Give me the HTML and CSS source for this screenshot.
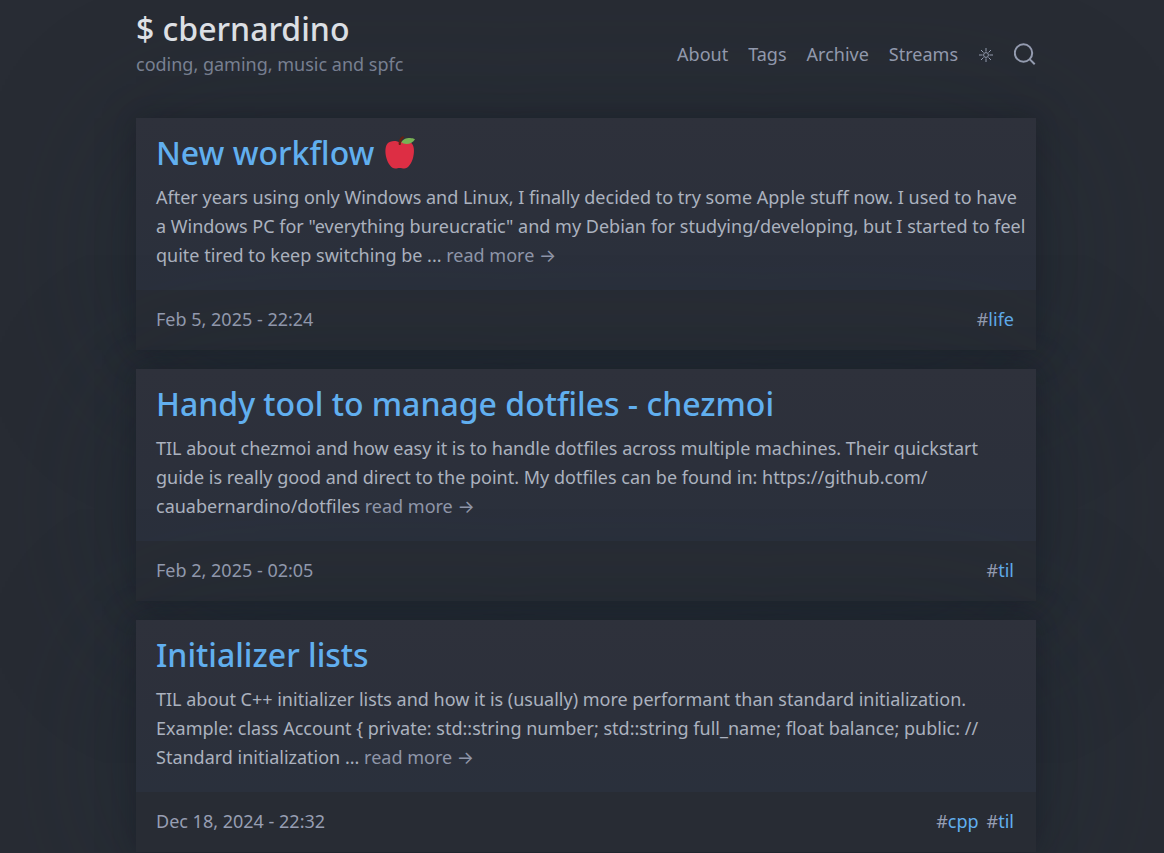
FILE: index.html
```html
<!DOCTYPE html>
<html lang="en">
<head>
<meta charset="utf-8">
<meta name="viewport" content="width=device-width, initial-scale=1">
<title>$ cbernardino</title>
<link rel="stylesheet" href="styles.css">
</head>
<body>
<div class="page">
  <header class="header">
    <div class="brand">
      <a class="brand-name" href="#">$ cbernardino</a>
      <p class="tagline">coding, gaming, music and spfc</p>
    </div>
    <nav class="nav">
      <a href="#">About</a>
      <a href="#">Tags</a>
      <a href="#">Archive</a>
      <a href="#">Streams</a>
      <button class="icon-button" type="button" aria-label="Toggle theme">
        <svg width="16" height="16" viewBox="0 0 16 16" fill="none" stroke="currentColor" stroke-width="1"><circle cx="8" cy="8" r="2.400"/><path d="M8 1v3.600M8 11.400v3.600M1 8h3.600M11.400 8h3.600M3 3l2.500 2.500M10.500 10.500L13 13M3 13l2.500-2.500M10.500 5.500L13 3"/></svg>
      </button>
      <button class="icon-button" type="button" aria-label="Search">
        <svg width="22" height="24" viewBox="0 0 22 24" fill="none" stroke="currentColor" stroke-width="2"><circle cx="9.500" cy="10" r="8.700"/><path d="M15.600 16.100L20.700 21.200"/></svg>
      </button>
    </nav>
  </header>
  <main class="posts">
    <article class="card">
      <div class="card-body">
        <h2><a href="#">New workflow</a>
          <svg class="apple" width="32" height="34" viewBox="0 0 32 34" role="img" aria-label="Apple"><path fill="#dd2e44" d="M16 6.500C12.500 4.200 6 4.300 3.300 7.800C1 10.800 1 17 2.400 22C3.800 27.500 7.500 32.500 11.300 32.500C13.200 32.500 14 32 15.700 32C17.500 32 18.500 32.500 20.300 32.500C24 32.500 27.500 27.500 29 22C30.400 17 30.500 10.800 28 7.800C25.500 4.300 19.500 4.200 16 6.500Z"/><path fill="#662113" d="M14.800 8.800C14.300 6 15.300 1.600 18.500.400C19.500.1 20.600 1 19.800 1.700C17.300 4 17 6 16.800 8.500C16.600 9.200 15.200 9.300 14.800 8.800Z"/><path fill="#77b255" d="M17.400 6.300C18.500 3.300 22.500 1.900 26 2C28 2.100 29.500 2.500 31 3.200C29.300 6.300 26 7.900 22.500 7.900C20.300 7.900 18.400 7.400 17.400 6.300Z"/></svg>
        </h2>
        <p>After years using only Windows and Linux, I finally decided to try some Apple stuff now. I used to have a Windows PC for "everything bureucratic" and my Debian for studying/developing, but I started to feel quite tired to keep switching be ... <a href="#">read more →</a></p>
      </div>
      <footer class="card-footer">
        <time datetime="2025-02-05T22:24">Feb 5, 2025 - 22:24</time>
        <div class="tags"><span>#<a href="#">life</a></span></div>
      </footer>
    </article>
    <article class="card">
      <div class="card-body">
        <h2><a href="#">Handy tool to manage dotfiles - chezmoi</a></h2>
        <p>TIL about chezmoi and how easy it is to handle dotfiles across multiple machines. Their quickstart guide is really good and direct to the point. My dotfiles can be found in: https://github.com/<wbr>cauabernardino/dotfiles <a href="#">read more →</a></p>
      </div>
      <footer class="card-footer">
        <time datetime="2025-02-02T02:05">Feb 2, 2025 - 02:05</time>
        <div class="tags"><span>#<a href="#">til</a></span></div>
      </footer>
    </article>
    <article class="card">
      <div class="card-body">
        <h2><a href="#">Initializer lists</a></h2>
        <p>TIL about C++ initializer lists and how it is (usually) more performant than standard initialization. Example: class Account { private: std::string number; std::string full_name; float balance; public: // Standard initialization ... <a href="#">read more →</a></p>
      </div>
      <footer class="card-footer">
        <time datetime="2024-12-18T22:32">Dec 18, 2024 - 22:32</time>
        <div class="tags"><span>#<a href="#">cpp</a></span><span>#<a href="#">til</a></span></div>
      </footer>
    </article>
  </main>
</div>
</body>
</html>
```
FILE: styles.css
```css
* { box-sizing: border-box; }

html { background: #282c34; }

body {
  margin: 0;
  font-family: "Noto Sans", Inter, sans-serif;
  font-size: 18px;
  line-height: 29px;
  color: #abb2bf;
  overflow-x: hidden;
}

a { color: inherit; text-decoration: none; }
p, h2 { margin: 0; }

.page {
  max-width: 940px;
  margin: 0 auto;
  padding: 8px 16px 20px 24px;
}

.header {
  display: flex;
  justify-content: space-between;
  align-items: flex-end;
  padding-bottom: 39px;
}

.brand-name {
  display: block;
  font-size: 32px;
  line-height: 42px;
  font-weight: 500;
  color: #e1e4e9;
}

.tagline { color: #7d8496; }

.nav {
  display: flex;
  align-items: center;
  gap: 20px;
  padding-bottom: 10px;
  color: #979eb2;
}

.icon-button {
  display: flex;
  padding: 0;
  border: 0;
  background: none;
  color: inherit;
}

.posts {
  display: grid;
  gap: 19px;
}

.card {
  background: #2e313b;
  box-shadow: 0 0 28px rgba(20, 22, 32, 0.5), 0 20px 160px rgba(28, 50, 60, 0.3);
}

.card-body {
  padding: 14px 6px 20px 20px;
  background: linear-gradient(#2e313b, #2c303b 55%, #2a303c);
}

.card h2 {
  display: flex;
  align-items: center;
  gap: 10px;
  margin-bottom: 9px;
  font-size: 32px;
  line-height: 42px;
  font-weight: 500;
  color: #61afef;
}

.card p a { color: #8f96a9; }

.card-footer {
  display: flex;
  justify-content: space-between;
  padding: 15px 22px 16px 20px;
  background: #282c34;
  color: #979eb2;
}

.tags { display: flex; gap: 8px; }
.tags a { color: #61afef; }
```
